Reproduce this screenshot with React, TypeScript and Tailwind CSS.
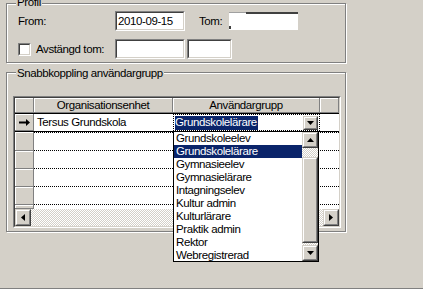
import React from 'react'

const items = [
  'Grundskoleelev',
  'Grundskolelärare',
  'Gymnasieelev',
  'Gymnasielärare',
  'Intagningselev',
  'Kultur admin',
  'Kulturlärare',
  'Praktik admin',
  'Rektor',
  'Webregistrerad',
]

const checker =
  'bg-[image:repeating-conic-gradient(#d4d0c8_0%_25%,#ffffff_0%_50%)] bg-[length:2px_2px]'

// classic sunken edit box
function Sunken({ className = '', children }: { className?: string; children?: React.ReactNode }) {
  return (
    <div className={`border border-[#808080] border-r-white border-b-white ${className}`}>
      <div className="h-full border border-[#404040] border-r-[#d4d0c8] border-b-[#d4d0c8] bg-white flex items-center">
        {children}
      </div>
    </div>
  )
}

// classic raised button
function Raised({ className = '', children }: { className?: string; children?: React.ReactNode }) {
  return (
    <div className={`border border-[#d4d0c8] border-r-[#404040] border-b-[#404040] bg-[#d4d0c8] ${className}`}>
      <div className="h-full border border-white border-r-[#808080] border-b-[#808080] flex items-center justify-center">
        {children}
      </div>
    </div>
  )
}

function Tri({ dir }: { dir: 'up' | 'down' | 'left' | 'right' }) {
  const d = {
    down: 'M0 0h7L3.5 4z',
    up: 'M3.5 0L7 4H0z',
    left: 'M4 0v7L0 3.5z',
    right: 'M0 0l4 3.5L0 7z',
  }[dir]
  const vertical = dir === 'up' || dir === 'down'
  return (
    <svg width={vertical ? 7 : 4} height={vertical ? 4 : 7} viewBox={vertical ? '0 0 7 4' : '0 0 4 7'}>
      <path d={d} fill="#000" />
    </svg>
  )
}

function HeaderCell({ w, children }: { w: string; children?: React.ReactNode }) {
  return (
    <div
      className={`${w} h-full bg-[#d4d0c8] border-r border-b border-[#808080] shadow-[inset_1px_1px_0_#fff] flex items-center justify-center`}
    >
      {children}
    </div>
  )
}

function Selector({ h, children }: { h: string; children?: React.ReactNode }) {
  return (
    <div
      className={`w-[19px] ${h} shrink-0 bg-[#d4d0c8] border-r border-b border-[#808080] shadow-[inset_1px_1px_0_#fff] flex items-center justify-center`}
    >
      {children}
    </div>
  )
}

export default function App() {
  return (
    <div className="w-[423px] h-[290px] bg-[#d4d0c8] overflow-hidden relative flex flex-col font-['Liberation_Sans',Arial,sans-serif] text-[11.5px] leading-[13px] tracking-[-0.4px] text-black">
      <div className="pl-[6px] pt-[3px]">
        {/* Profil */}
        <div className="relative w-[340px] h-[60px] border border-[#808080] shadow-[inset_1px_1px_0_#fff,1px_1px_0_#fff] pt-[7px] pl-[11px]">
          <span className="absolute left-[9px] top-[-8px] px-[1px] bg-[#d4d0c8]">Profil</span>

          <div className="flex items-center h-[20px]">
            <span className="w-[97px]">From:</span>
            <Sunken className="w-[70px] h-[20px]">
              <span className="pl-[1px]">2010-09-15</span>
            </Sunken>
            <span className="ml-[14px] w-[30px]">Tom:</span>
            <div className="w-[70px] h-[19px] bg-white flex flex-col border-r border-b border-[#d4d0c8]">
              <div className="flex h-[2px]">
                <div className="w-[17px] h-[1px] bg-[#a0a0a0]" />
                <div className="flex-1 bg-[#404040]" />
              </div>
              <div className="flex-1 flex items-end">
                <div className="w-[2px] h-[3px] mb-[1px] bg-[#404040]" />
              </div>
            </div>
          </div>

          <div className="flex items-center h-[20px] mt-[8px]">
            <Sunken className="w-[13px] h-[13px]" />
            <span className="ml-[5px] w-[79px]">Avstängd tom:</span>
            <Sunken className="w-[70px] h-[20px]" />
            <Sunken className="ml-[2px] w-[45px] h-[20px]" />
          </div>
        </div>

        {/* Snabbkoppling användargrupp */}
        <div className="relative mt-[9px] w-[340px] h-[160px] border border-[#808080] shadow-[inset_1px_1px_0_#fff,1px_1px_0_#fff]">
          <span className="absolute left-[9px] top-[-6px] px-[1px] bg-[#d4d0c8]">Snabbkoppling användargrupp</span>

          <div className="ml-[6px] mt-[23px] w-[328px] h-[132px] border border-[#808080] border-r-white border-b-white">
            <div className="h-full border border-[#404040] border-r-[#d4d0c8] border-b-[#d4d0c8] bg-white flex flex-col">
              <div className="flex h-[15px] shrink-0">
                <HeaderCell w="w-[19px]" />
                <HeaderCell w="w-[139px]">Organisationsenhet</HeaderCell>
                <HeaderCell w="w-[147px]">Användargrupp</HeaderCell>
                <HeaderCell w="w-[19px]" />
              </div>

              {/* current row */}
              <div className="flex h-[19px] shrink-0 border-y border-black">
                <Selector h="h-full">
                  <svg width="11" height="7" viewBox="0 0 11 7">
                    <path d="M0 2.5h7V0l4 3.5L7 7V4.5H0z" fill="#000" />
                  </svg>
                </Selector>
                <div className="w-[139px] flex items-center pl-[3px]">Tersus Grundskola</div>
                <div className="w-[147px] border border-dotted border-black flex items-center">
                  <span className="ml-[1px] h-[14px] flex items-center bg-[#0a246a] text-white pr-[1px]">
                    Grundskolelärare
                  </span>
                  <Raised className="ml-auto mr-[1px] w-[15px] h-[14px]">
                    <Tri dir="down" />
                  </Raised>
                </div>
                <div className="flex-1" />
              </div>

              <div className="flex h-[19px] shrink-0">
                <Selector h="h-full" />
                <div className="flex-1 border-y border-dotted border-black" />
              </div>
              {[0, 1, 2].map((i) => (
                <div key={i} className="flex h-[18px] shrink-0">
                  <Selector h="h-full" />
                  <div className="flex-1 border-b border-dotted border-black" />
                </div>
              ))}
              <div className="flex h-[4px] shrink-0">
                <Selector h="h-full" />
                <div className="flex-1" />
              </div>

              {/* horizontal scrollbar */}
              <div className={`flex h-[17px] shrink-0 ${checker}`}>
                <Raised className="w-[16px] h-full">
                  <Tri dir="left" />
                </Raised>
                <div className="flex-1" />
                <Raised className="w-[16px] h-full">
                  <Tri dir="right" />
                </Raised>
              </div>
            </div>
          </div>
        </div>
      </div>

      <div className="mt-auto h-[2px] border-t border-[#808080] border-b border-b-white" />

      {/* open drop-down list */}
      <div className="absolute left-[173px] top-[131px] w-[146px] h-[131px] border border-black bg-white flex overflow-hidden">
        <div className="w-[128px] flex flex-col">
          {items.map((item, i) => (
            <div
              key={item}
              className={`h-[13px] shrink-0 pl-[2px] flex items-center ${i === 1 ? 'bg-[#0a246a] text-white' : ''}`}
            >
              {item}
            </div>
          ))}
        </div>
        <div className="w-[16px] flex flex-col">
          <Raised className="w-[16px] h-[16px] shrink-0">
            <Tri dir="up" />
          </Raised>
          <div className={`flex-1 flex flex-col ${checker}`}>
            <Raised className="mt-[9px] w-[16px] h-[86px]" />
          </div>
          <Raised className="w-[16px] h-[16px] shrink-0">
            <Tri dir="down" />
          </Raised>
        </div>
      </div>
    </div>
  )
}
